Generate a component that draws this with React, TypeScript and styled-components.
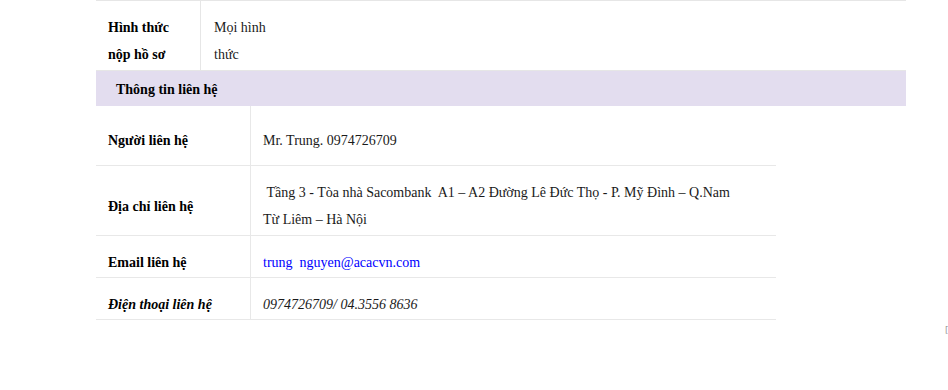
import styled, { createGlobalStyle } from 'styled-components';

const GlobalStyle = createGlobalStyle`
  html, body {
    margin: 0;
    padding: 0;
    background: #fff;
  }
  body {
    font-family: "Liberation Serif", "Times New Roman", serif;
    font-size: 14px;
    color: #1a1a1a;
  }
  * {
    box-sizing: border-box;
  }
`;

type Contact = {
  label: string;
  value: string;
  first?: boolean;
  tall?: boolean;
  email?: boolean;
  italic?: boolean;
};

const contacts: Contact[] = [
  { label: 'Người liên hệ', value: 'Mr. Trung. 0974726709', first: true },
  {
    label: 'Địa chỉ liên hệ',
    value: '\u00a0Tầng 3 - Tòa nhà Sacombank\u00a0 A1 – A2 Đường Lê Đức Thọ - P. Mỹ Đình – Q.Nam Từ Liêm – Hà Nội',
    tall: true,
  },
  { label: 'Email liên hệ', value: 'trung\u00a0\u00a0nguyen@acacvn.com', email: true },
  { label: 'Điện thoại liên hệ', value: '0974726709/ 04.3556 8636', italic: true },
];

const padFor = (c: Contact) => (c.first ? '21px 0 11px' : c.tall ? '13px 0 2px' : '13px 0 1px');

const App = () => {
  return (
    <>
      <GlobalStyle />
      <Page>
        <InfoTable>
          <InfoLabel>Hình thức nộp hồ sơ</InfoLabel>
          <InfoValue>
            <Narrow>Mọi hình thức</Narrow>
          </InfoValue>
        </InfoTable>

        <SectionHeader>Thông tin liên hệ</SectionHeader>

        <ContactTable>
          {contacts.map((c) => (
            <ContactRow key={c.label} $pad={padFor(c)}>
              <ContactLabel $italic={c.italic}>
                <span>{c.label}</span>
              </ContactLabel>
              <ContactValue $italic={c.italic} $email={c.email}>
                {c.value}
              </ContactValue>
            </ContactRow>
          ))}
        </ContactTable>
      </Page>
      <EdgeMark>[</EdgeMark>
    </>
  );
};

export default App;

// Styled Components
const Page = styled.div`
  width: 906px;
  padding-left: 96px;
  line-height: 27px;
`;

const InfoTable = styled.div`
  display: grid;
  grid-template-columns: 105px 1fr;
  border-top: 1px solid #e6e6e6;
  border-bottom: 1px solid #e6e6e6;
`;

const InfoLabel = styled.div`
  padding: 13px 12px 2px;
  border-right: 1px solid #e6e6e6;
  font-weight: bold;
  color: #000;
`;

const InfoValue = styled.div`
  padding: 13px 13px 2px;
`;

const Narrow = styled.div`
  width: 62px;
`;

const SectionHeader = styled.div`
  height: 35px;
  padding: 5px 20px 3px;
  background: #e3ddef;
  font-weight: bold;
  color: #000;
`;

const ContactTable = styled.div`
  width: 680px;
  display: flex;
  flex-direction: column;
`;

const ContactRow = styled.div<{ $pad: string }>`
  display: grid;
  grid-template-columns: 155px 1fr;
  border-bottom: 1px solid #e8e8e8;

  & > * {
    padding-top: ${(p) => p.$pad.split(' ')[0]};
    padding-bottom: ${(p) => p.$pad.split(' ')[2]};
  }
`;

const ContactLabel = styled.div<{ $italic?: boolean }>`
  display: flex;
  align-items: center;
  padding-left: 12px;
  padding-right: 12px;
  border-right: 1px solid #e8e8e8;
  font-weight: bold;
  font-style: ${(p) => (p.$italic ? 'italic' : 'normal')};
  color: #000;
`;

const ContactValue = styled.div<{ $italic?: boolean; $email?: boolean }>`
  padding-left: 12px;
  padding-right: 36px;
  font-style: ${(p) => (p.$italic ? 'italic' : 'normal')};
  color: ${(p) => (p.$email ? '#0000ff' : '#1a1a1a')};
`;

const EdgeMark = styled.span`
  position: absolute;
  left: 945px;
  top: 325px;
  font-family: "DejaVu Sans", sans-serif;
  font-size: 9px;
  line-height: 10px;
  color: #999;
`;
